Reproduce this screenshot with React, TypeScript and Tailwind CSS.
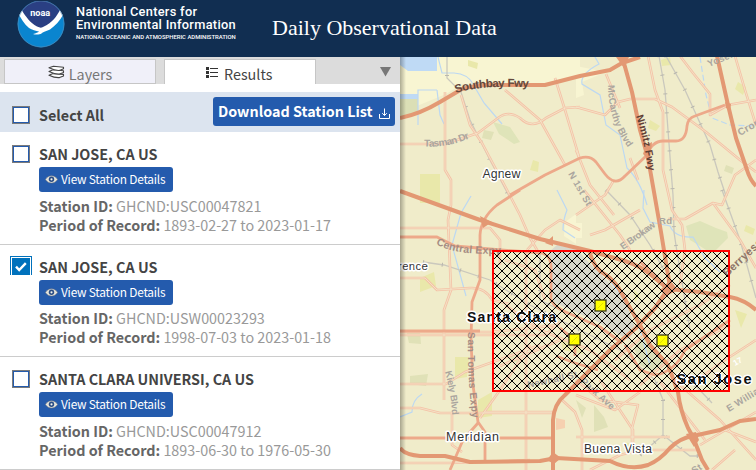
import React from "react";

const SANS = "font-['Noto_Sans_CJK_SC',sans-serif]";

type Station = { name: string; id: string; period: string; checked: boolean };

const stations: Station[] = [
  { name: "SAN JOSE, CA US", id: "GHCND:USC00047821", period: "1893-02-27 to 2023-01-17", checked: false },
  { name: "SAN JOSE, CA US", id: "GHCND:USW00023293", period: "1998-07-03 to 2023-01-18", checked: true },
  { name: "SANTA CLARA UNIVERSI, CA US", id: "GHCND:USC00047912", period: "1893-06-30 to 1976-05-30", checked: false },
];

function NoaaLogo() {
  return (
    <svg className="block shrink-0" width="48" height="48" viewBox="0 0 48 48">
      <defs>
        <clipPath id="disc"><circle cx="24" cy="23" r="23.4" /></clipPath>
      </defs>
      <g clipPath="url(#disc)">
        <rect width="48" height="48" fill="#0a85cf" />
        <path d="M0 0H48V10C42 15 38 23 29 27.5C25 30 22 29 18 26C11 22 7 15 2 11Z" fill="#2a3f83" />
        <path d="M1 12L5 9.5C9 16 13 21.500 20 25.500C23 27 25 27 27 25.500C35 22 40 15 43 9L47 12C43 20 38 25 33 28.500C30 30 25.500 31 24.500 32.500C22.500 34 18 33.800 16 33C19 32.300 21 31.500 22 30.500C19 30 15 29 12 27C7 23 4 17 1 12Z" fill="#fff" />
      </g>
      <circle cx="24" cy="23" r="23" fill="none" stroke="#5c8fb5" strokeWidth=".6" />
      <text x="13.2" y="14.6" textLength="20" lengthAdjust="spacingAndGlyphs" fontFamily="Roboto, sans-serif" fontWeight="700" fontSize="9.5" fill="#fff">noaa</text>
    </svg>
  );
}

function LayersIcon() {
  return (
    <svg className="block" width="17" height="14" viewBox="0 0 17 14" fill="#fff" stroke="#444" strokeWidth="1.1" strokeLinejoin="round">
      <path d="M1 10.2L5 8.6L15.5 9.4V11L11.5 12.6C7 13 4 11.6 1 10.2Z" />
      <path d="M1 6.4L5 4.8L15.5 5.8V7.4L11.5 9C7 9.4 4 7.8 1 6.4Z" />
      <path d="M1 2.8L5.5 1.2L15.5 2.2V3.8L11.5 5.4C7 5.8 4 4.2 1 2.8Z" />
    </svg>
  );
}

function ListIcon() {
  return (
    <svg className="block" width="12" height="12" viewBox="0 0 12 12" fill="#333">
      <path d="M0 0h3v3H0zM0 4h3v3H0zM0 8h3v3H0zM4 1h8v1H4zM4 5h8v1H4zM4 9h8v1H4z" />
    </svg>
  );
}

function EyeIcon() {
  return (
    <svg className="block shrink-0" width="13" height="9" viewBox="0 0 13 9">
      <path d="M.4 4.5C3.4 -.4 9.6 -.4 12.6 4.5C9.6 9.3 3.4 9.3 .4 4.5Z" fill="#e4e4dc" stroke="#6b6f76" strokeWidth=".5" />
      <circle cx="6.5" cy="4.3" r="2.7" fill="#2a4d85" />
      <circle cx="6.5" cy="4.3" r="1.1" fill="#f3f3ee" />
    </svg>
  );
}

function DownloadIcon() {
  return (
    <svg className="block" width="11" height="11" viewBox="0 0 11 11" fill="none" stroke="#fff" strokeWidth="1">
      <path d="M.5 6V10.500H10.500V6M5.500 .5V7.500M3.200 5.200L5.500 7.500L7.800 5.200" />
    </svg>
  );
}

function Checkbox({ checked = false }: { checked?: boolean }) {
  if (checked) {
    return (
      <div className="-ml-0.5 -mt-0.5 h-[19px] w-[22px] shrink-0 bg-[#0071bc] pl-px pt-px">
        <div className="h-[18px] w-5 border-x border-t border-white pl-px pt-px">
          <svg className="block" width="16" height="16" viewBox="0 0 16 16" fill="none" stroke="#fff" strokeWidth="2.4">
            <path d="M3 7.6L6.2 11L12.8 4.2" />
          </svg>
        </div>
      </div>
    );
  }
  return (
    <div className="h-[18px] w-[18px] shrink-0 border border-[#7b7b7b]">
      <div className="h-4 w-4 border border-[#245bad] bg-white" />
    </div>
  );
}

function StationRow({ s }: { s: Station }) {
  return (
    <div className="flex h-[112.5px] shrink-0 border-b border-[#ccc] pl-3">
      <div className="mt-[13px] w-[27px] shrink-0"><Checkbox checked={s.checked} /></div>
      <div className="flex flex-col items-start whitespace-nowrap">
        <div className="mt-3 h-5 text-[14.35px] font-bold leading-5 text-[#444]">{s.name}</div>
        <button className="mt-[3px] flex h-[25px] w-[134px] items-center rounded-[3px] bg-[#245bad] pl-1.5 text-[11.9px] leading-none text-white">
          <EyeIcon />
          <span className="-mt-px ml-[3px] tracking-[-0.02em]">View Station Details</span>
        </button>
        <div className="mt-[3.5px] h-[19px] text-[14.35px] leading-[19px] text-[#999]"><b className="text-[#666]">Station ID:</b> {s.id}</div>
        <div className="h-[19px] text-[14.35px] leading-[19px] text-[#999]"><b className="text-[#666]">Period of Record:</b> {s.period}</div>
      </div>
    </div>
  );
}

const minorRoads = [
  "M400 144H445L478 133L498 118Q508 110 520 118Q532 130 546 118L565 108L580 107",
  "M445 92V170L451 180V205L448 220L451 290L444 310V400",
  "M461 95L470 125L482 143L491 160L507 190L520 215L530 238L540 255",
  "M505 90L540 120L565 165",
  "M555 78L565 110L580 160",
  "M400 228H490L500 240V265",
  "M400 278H425L437 290L470 288Q485 287 492 300L510 304",
  "M576 107L605 115L618 102L630 99H655L672 107L706 132L740 160L756 172",
  "M648 56L655 90L663 112V170L672 210L682 225L685 250L680 285",
  "M606 74L620 108M630 158L638 180",
  "M680 56L693 73L710 94V115L728 105L756 100",
  "M735 56L745 90L756 125",
  "M756 160L735 175L722 205L713 203L685 219H668",
  "M713 203L740 240L756 268",
  "M576 150L590 185L614 215M576 215L605 195L614 180M590 235L605 230L640 210M584 190L620 235L630 250",
  "M526 250V470M400 332H490L560 325",
  "M400 384H446L465 372L540 345",
  "M485 412H553M400 408H420L440 413H553",
  "M400 335H492L545 335L560 322",
  "M400 463H450L530 460",
  "M562 400L575 412L582 430V470",
  "M576 437H670M632 450V428L638 405L600 400L576 380M600 380L633 430V450",
  "M680 385L720 420L756 460M660 382L705 440M690 385L725 360L756 340",
  "M700 445L756 412M725 430L756 442M712 470L735 450",
  "M500 366L560 340M505 305L540 330L590 350L630 380",
  "M640 385L680 350L730 325M615 360L650 330L700 305L730 285",
  "M505 260L535 270L545 300",
  "M580 230L560 220L545 230L527 250",
  "M576 395L615 410L640 392M590 470L620 455L640 450H700",
  "M452 412V445L462 452M480 418L500 390L530 345",
];

const rails = [
  "M447 56V78L461 92L470 120L490 160L509 196",
  "M659 56L665 90L671 170L673 195L674 232L677 252L690 330",
  "M666 56L685 90L710 145L718 172L726 196",
  "M722 190L740 240L756 298",
  "M423 262L444 265L490 280L530 305L580 330L620 350L655 380L663 400V435L690 456H700",
  "M540 252L540 300L560 310",
  "M606 190L630 215L650 245L664 270",
  "M640 455L663 435M695 385L712 403",
];

const mediumRoads = [
  "M510 195L545 175L580 158Q590 155 596 162L605 174Q615 187 625 176L645 157Q652 141 663 141H676Q686 141 687 126Q688 118 695 116L725 105",
  "M400 237H437L455 246L490 249L542 253Q552 256 551 270V300Q555 308 568 313L600 327L622 343",
  "M520 190L497 205Q481 218 480 235V280L472 302L471 340L473 385L478 422L485 432V463",
  "M478 423L463 440L450 470",
  "M400 331H480M400 438H553",
  "M556 356L575 363L598 370M625 345L640 370L655 375Q675 372 685 350L730 320",
  "M560 328L575 340L575 356M668 289L655 275L640 262",
];

const highways = [
  "M400 118Q420 114 440 102L462 89Q480 84 500 85H545L580 76L610 70L622 63L640 57",
  "M622 56L632 92L640 130L648 158L654 192L661 232L670 287",
  "M400 191L480 220L540 239L590 251L625 261Q640 266 650 274L668 289L700 292L730 297Q745 300 756 310",
  "M717 56L728 105L736 138L747 170Q750 180 756 186",
  "M590 253Q594 269 606 275Q616 282 622 294L640 325L650 345L668 365L678 392Q680 410 688 428L693 437L702 460L708 470",
  "M668 289L655 308L636 328L610 350L565 395Q554 404 553 420V470",
  "M400 448Q405 455 420 456H445L470 462L540 461L556 458L610 461Q630 471 648 465Q660 460 670 448Q680 438 693 436L720 430L740 421L756 419",
];

const greens = [
  "M420 174h20v29h-20z", "M484 130l10 2 -3 8 -9 -2z", "M468 60l10 3 -1 6 -9 -3z", "M533 160l6 2 -1 10 -8 -2z",
  "M406 330l14 2 1 12 -12 -1z", "M420 278l14 -6 2 14 -16 6z", "M478 400l14 -8 0 24 -14 2z", "M594 405l10 12 4 10 -14 5z",
  "M560 338l18 0 5 16 -20 -4z", "M650 120l10 6 -4 5 -8 -3z", "M410 376l18 -2 -2 12 -16 -2z", "M455 357l14 0 -2 20 -12 2z",
  "M738 82l8 5 -3 8 -8 -6z", "M726 165l8 3 -2 6 -8 -3z", "M634 290l6 5 -5 7z", "M746 225l9 4 -2 6 -9 -4z", "M510 350l10 5 -3 8 -9 -4z",
  "M625 442l10 3 -2 7 -9 -3z", "M735 310l12 4 -6 14z", "M576 400l10 8 -4 10z", "M661 60l9 -3 1 8 -9 1z",
];

const textHalo = {
  stroke: "#fff", strokeWidth: 3, strokeLinejoin: "round" as const, paintOrder: "stroke",
};

function Marker({ x, y }: { x: number; y: number }) {
  return (
    <g>
      <rect x={x - 5.5} y={y - 5.5} width="11" height="11" fill="#ffff00" stroke="#3c3c1a" strokeWidth="1.3" />
      <path d={`M${x - 3} ${y + 3}L${x + 3} ${y - 3}`} stroke="#d8d800" strokeWidth=".8" />
    </g>
  );
}

function MapView() {
  return (
    <svg className="block h-full w-full" viewBox="400 57 356 413" preserveAspectRatio="none" fontFamily="'Liberation Sans', Arial, sans-serif">
      <defs>
        <pattern id="hatch" width="10" height="10" patternUnits="userSpaceOnUse" x="492" y="251">
          <path d="M-1 -1L11 11M-1 11L11 -1" stroke="#000" strokeWidth="1" />
        </pattern>
        <linearGradient id="edge" x1="0" x2="1" y1="0" y2="0">
          <stop offset="0" stopColor="#000" stopOpacity=".3" />
          <stop offset="1" stopColor="#000" stopOpacity="0" />
        </linearGradient>
        <path id="southbay" d="M456 93Q485 84 540 88" />
        <path id="tasman" d="M424 146.500Q452 148 476 135" />
        <path id="mccarthy" d="M608 85Q608 125 634 155" />
        <path id="nimitz" d="M636 116Q646 145 650 185" />
        <path id="central" d="M436 244Q456 257 515 253" />
        <path id="kiely" d="M445 372Q452 395 453 430" />
        <path id="santomas" d="M468 332Q467 385 474 430" />
      </defs>
      <rect x="400" y="57" width="356" height="413" fill="#f0ecca" />
      <path d="M436 57H580V76L545 84H462L446 94L400 113V57Z" fill="#f8f5d2" />
      <path d="M576 66L606 72L582 82L584 95L576 98ZM576 223h6v15h-6zM565 222l11 -8v30l-12 -8z" fill="#f8f5d2" />
      <path d="M400 57H437V71H408L400 65ZM400 94H418V99H400Z" fill="#bfdaf5" />
      <path d="M400 99H418V113L400 118Z" fill="#dbdfb6" />
      {greens.map((d, i) => <path key={i} d={d} fill={i % 3 === 1 ? "#e0e1b7" : "#e9e8aa"} />)}
      <path d="M493 122L510 127L520 142L514 144L499 134Z M686 226L700 221L716 228L727 232L728 238L712 254L700 246L690 240Z" fill="#dfe4b9" />
      <path d="M549 252L557 245L578 250Q588 263 600 273L625 300L636 330L628 340L598 322L553 302Z" fill="#d8d8cb" />
      <path d="M634 348L642 336L650 344L666 365L655 373L640 365Z" fill="#dadeb9" />
      <path d="M556 418L565 420V428L556 430Z" fill="#f6d0b0" />
      <g fill="none" stroke="#bcd8f2" strokeWidth="1.2">
        <path d="M438 57L442 73H454Q468 74 473 84L484 103L502 124M437 90H418V125M437 90L440 115L444 124" />
        <path d="M595 57L599 64Q580 74 582 84L600 95L606 125L620 135L627 168Q640 180 647 205" />
        <path d="M471 196L461 213L452 245L463 285L466 296M557 190L567 210Q563 220 563 230L575 238" />
        <path d="M644 190L643 208L650 222L670 226Q675 238 693 237L705 258L720 272M400 417L412 412Q412 400 422 394" />
        <path d="M700 57L706 95L712 118L730 125L756 126" strokeDasharray="6 3" />
        <path d="M581 250L605 275L632 309L640 330L650 365" />
      </g>
      <g fill="none" stroke="#cac8bd" strokeWidth="1.3">
        {rails.map((d, i) => <path key={i} d={d} />)}
      </g>
      <g fill="none" stroke="#bab8ae" strokeWidth="4" strokeDasharray="1 18">
        {rails.map((d, i) => <path key={i} d={d} />)}
      </g>
      <g fill="none" stroke="#f4c2a7" strokeWidth="2.6" strokeLinejoin="round">
        {minorRoads.map((d, i) => <path key={i} d={d} />)}
      </g>
      <g fill="none" stroke="#f4e5c8" strokeWidth=".9" strokeLinejoin="round">
        {minorRoads.map((d, i) => <path key={i} d={d} />)}
      </g>
      <g fill="none" stroke="#eda98a" strokeWidth="2.8" strokeLinejoin="round">
        {mediumRoads.map((d, i) => <path key={i} d={d} />)}
      </g>
      <g fill="none" stroke="#e39873" strokeWidth="4" strokeLinejoin="round">
        {highways.map((d, i) => <path key={i} d={d} />)}
      </g>
      <path d="M616 57L629 57L624 68ZM725 102L731 104L730 110L726 108ZM480 216L492 222L483 228ZM545 243L553 236L553 246ZM660 290L670 280L678 290L666 296ZM646 145L652 142L650 160L643 154ZM686 434L696 432L699 440L694 447ZM547 460L553 452L561 458L554 464Z" fill="#e39873" />

      <g fontWeight="700" letterSpacing=".3">
        <text fontSize="11.5" fill="#64483c"><textPath href="#southbay" textLength="74">Southbay Fwy</textPath></text>
        <text fontSize="10" fill="#aaa59e"><textPath href="#tasman" textLength="47">Tasman Dr</textPath></text>
        <text fontSize="9.5" fill="#aaa59e"><textPath href="#mccarthy" textLength="67">McCarthy Blvd</textPath></text>
        <text fontSize="10.5" fill="#5f4035"><textPath href="#nimitz" textLength="57">Nimitz Fwy</textPath></text>
        <text fontSize="10.5" fill="#a58c83"><textPath href="#central" textLength="67">Central Expy</textPath></text>
        <text fontSize="9.5" fill="#aaa59e"><textPath href="#kiely" textLength="44">Kiely Blvd</textPath></text>
        <text fontSize="10" fill="#a58c83"><textPath href="#santomas" textLength="86">San Tomas Expy</textPath></text>
        <text fontSize="9.5" fill="#aaa59e" transform="translate(568 174) rotate(60)">N 1st St</text>
        <text fontSize="9.5" fill="#aaa59e" transform="translate(623 250) rotate(-36)" textLength="41">E Brokaw</text>
        <text fontSize="9.5" fill="#aaa59e" x="659" y="224">Rd</text>
        <text fontSize="9.5" fill="#aaa59e" transform="translate(709 67) rotate(-22)">Yosemite</text>
        <text fontSize="10" fill="#aaa59e" transform="translate(740 136) rotate(-30)">Cropley</text>
        <text fontSize="11" fill="#8e7468" transform="translate(727 277) rotate(-43)">Berryessa</text>
        <text fontSize="9.5" fill="#aaa59e" transform="translate(729 412) rotate(-32)">E William</text>
        <text fontSize="9.5" fill="#a5a09b" transform="translate(528 388) rotate(-12)">Newhall St</text>
        <text fontSize="9.5" fill="#aaa59e" transform="translate(580 382) rotate(42)">Park Ave</text>
        <text fontSize="9.5" fill="#aaa59e" transform="translate(694 474) rotate(-32)">St</text>
        <text fontSize="8" fill="#fff" transform="translate(735 366) rotate(-30)">17</text>
      </g>
      <g fill="#333" style={textHalo}>
        <text x="482.5" y="178" fontSize="12.5" textLength="38">Agnew</text>
        <text x="398" y="269.5" fontSize="11.5" textLength="30">rence</text>
        <text x="446" y="440.5" fontSize="12.5" textLength="53">Meridian</text>
        <text x="584" y="453" fontSize="12" textLength="68">Buena Vista</text>
        <text x="467" y="321.500" fontSize="14" fontWeight="700" fill="#111" textLength="89">Santa Clara</text>
        <text x="676.5" y="384" fontSize="14.5" fontWeight="700" fill="#111" textLength="75">San Jose</text>
      </g>
      <rect x="493" y="251" width="236" height="140" fill="url(#hatch)" stroke="#f00" strokeWidth="2" />
      <Marker x={600.5} y={305.5} />
      <Marker x={574.5} y={339.5} />
      <Marker x={662.5} y={340.5} />
      <rect x="400" y="57" width="6" height="413" fill="url(#edge)" />
    </svg>
  );
}

export default function App() {
  return (
    <div className={`flex h-[470px] w-[756px] flex-col overflow-hidden bg-white ${SANS}`}>
      <header className="flex h-[57px] shrink-0 bg-[#112e51] pl-[17px] text-white">
        <div className="mt-px"><NoaaLogo /></div>
        <div className="ml-[11px] w-[196px] shrink-0 whitespace-nowrap pt-[5px] font-['Roboto',sans-serif] font-medium">
          <div className="h-[13px] text-[12.8px] leading-[13px] tracking-[0.3px]">National Centers for</div>
          <div className="h-[13px] text-[12.8px] leading-[13px] tracking-[0.3px]">Environmental Information</div>
          <div className="mt-[3px] text-[5.9px] leading-[7px]">NATIONAL OCEANIC AND ATMOSPHERIC ADMINISTRATION</div>
        </div>
        <h1 className="mt-4 whitespace-nowrap font-['Liberation_Serif',serif] text-[22px] leading-6">Daily Observational Data</h1>
      </header>
      <div className="flex min-h-0 flex-1">
        <aside className="flex w-[400px] shrink-0 flex-col overflow-hidden bg-white">
          <nav className="flex h-[27px] shrink-0 items-stretch bg-[#dcdcdc] pl-1 pt-[2px] text-[14.35px] leading-none">
            <div className="flex w-[152px] items-center justify-center gap-1 border border-[#c6c6c6] bg-[#f0f0f9] pt-1.5 text-[#777]">
              <span className="-mt-1.5"><LayersIcon /></span>
              <span>Layers</span>
            </div>
            <div className="ml-2 flex w-[152px] items-center border-x border-t border-[#c6c6c6] bg-white pl-[41px] pt-1 text-[#444]">
              <span className="-mt-0.5"><ListIcon /></span>
              <span className="ml-1.5">Results</span>
            </div>
            <div className="ml-auto mr-[9px] mt-2">
              <svg className="block" width="11" height="10" viewBox="0 0 11 10"><path d="M0 0H11L5.5 9.5Z" fill="#777" /></svg>
            </div>
          </nav>
          <div className="mt-2 flex h-10 shrink-0 items-center bg-[#dce4ef] pl-3 pr-[5px]">
            <div className="mt-1.5"><Checkbox /></div>
            <span className="ml-[9px] pt-[7px] text-[14.35px] font-bold leading-none text-[#444]">Select All</span>
            <button className="-mt-px ml-auto flex h-[29px] w-[182px] items-center rounded-[3px] bg-[#245bad] pl-[5px] text-[14.35px] font-bold leading-none text-white">
              <span className="whitespace-nowrap">Download Station List</span>
              <span className="ml-1.5 mt-1"><DownloadIcon /></span>
            </button>
          </div>
          {stations.map((s) => <StationRow key={s.id} s={s} />)}
        </aside>
        <main className="min-w-0 flex-1"><MapView /></main>
      </div>
    </div>
  );
}
